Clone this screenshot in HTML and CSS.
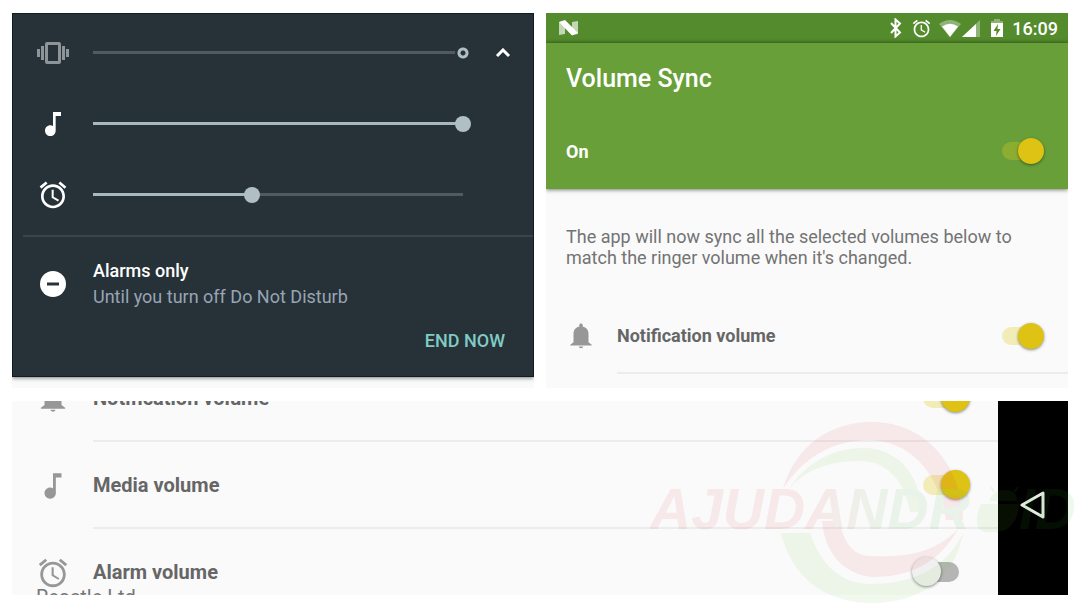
FILE: index.html
```html
<!DOCTYPE html>
<html lang="en">
<head>
   <meta charset="UTF-8">
   <title>Volume Sync</title>
   <link rel="stylesheet" href="styles.css">
</head>
<body>
   <!-- shared icons -->
   <svg class="sprite" width="0" height="0">
      <symbol id="note" viewBox="0 0 24 24"><path d="M12 3v10.550c-.59-.34-1.270-.55-2-.55-2.210 0-4 1.790-4 4s1.790 4 4 4 4-1.790 4-4V6h4V3h-6z"/></symbol>
      <symbol id="alarm" viewBox="0 0 24 24"><path d="M22 5.720l-4.600-3.860-1.290 1.530 4.600 3.860L22 5.720zM7.880 3.390L6.600 1.860 2 5.710l1.290 1.530 4.590-3.850zM12.500 8H11v6l4.750 2.850.75-1.230-4-2.370V8zM12 4c-4.970 0-9 4.030-9 9s4.020 9 9 9c4.970 0 9-4.030 9-9s-4.030-9-9-9zm0 16c-3.870 0-7-3.130-7-7s3.130-7 7-7 7 3.130 7 7-3.130 7-7 7z"/></symbol>
      <symbol id="bell" viewBox="-2 -.5 28 28"><path d="M12 24c1.200 0 2-.8 2-1.600h-4c0 .8.8 1.600 2 1.600zM19 18.500V10.500c0-3.600-2-6.100-5.400-6.900V2.500c0-.9-.7-1.500-1.600-1.500s-1.600.6-1.600 1.500v1.100C7 4.400 5 6.900 5 10.500v8l-3 2.200v.8h20v-.8z"/></symbol>
   </svg>

   <main class="page">
      <section class="panel volume">
         <div class="volume-card">
            <div class="volume-row">
               <svg class="icon muted" viewBox="0 0 32 32"><path d="M10 5h12q2 0 2 2v18q0 2-2 2H10q-2 0-2-2V7q0-2 2-2zm1 3v16h10V8zM4 9h3v14H4zM0 12h3v8H0zM25 9h3v14h-3zM29 12h3v8h-3z"/></svg>
               <input class="slider ring" type="range" value="100" aria-label="Ringer volume" style="--fill: 0%">
               <button class="collapse" type="button" aria-label="Collapse">
                  <svg width="16" height="10" viewBox="0 0 16 10"><path d="M2 8l6-6 6 6"/></svg>
               </button>
            </div>
            <div class="volume-row">
               <svg class="icon"><use href="#note"/></svg>
               <input class="slider" type="range" value="100" aria-label="Media volume" style="--fill: 100%">
            </div>
            <div class="volume-row">
               <svg class="icon"><use href="#alarm"/></svg>
               <input class="slider" type="range" value="43" aria-label="Alarm volume" style="--fill: 43%">
            </div>
            <div class="dnd">
               <svg class="dnd-icon" viewBox="0 0 26 26"><circle cx="13" cy="13" r="13"/><path d="M7 13h12"/></svg>
               <div>
                  <div class="dnd-title">Alarms only</div>
                  <div class="dnd-sub">Until you turn off Do Not Disturb</div>
               </div>
            </div>
            <button class="end" type="button">END NOW</button>
         </div>
      </section>

      <section class="panel app">
         <div class="status">
            <svg width="20" height="16" viewBox="0 0 20 16"><path d="M0 2l6-1v13l-6 1zM13 2l6-1v13l-6 1z" opacity=".65"/><path d="M0 2L6 0l13 13-6 2.500z"/></svg>
            <div class="status-icons">
               <svg class="bt" width="14" height="20" viewBox="0 0 14 20"><path d="M2 5l9 9.500-4.500 4V1.500L11 5.500 2 15"/></svg>
               <svg class="st-alarm" width="21" height="21"><use href="#alarm"/></svg>
               <svg class="wifi" width="22" height="17" viewBox="0 0 22 17"><path d="M0 4Q11-4 22 4L11 17z" opacity=".35"/><path d="M3 6.500Q11 1 19 6.500L11 17z"/></svg>
               <svg class="cell" width="18" height="17" viewBox="0 0 18 17"><path d="M18 0v17H0z" opacity=".35"/><path d="M14 4v13H0z"/></svg>
               <svg class="batt" width="12" height="18" viewBox="0 0 12 18"><path d="M0 2h3V0h6v2h3v3H0z" opacity=".35"/><path fill-rule="evenodd" d="M0 4h12v14H0zM7 5l-4.500 7h3L5 17l4.500-7h-3z"/></svg>
               <span>16:09</span>
            </div>
         </div>
         <header>
            <h1>Volume Sync</h1>
            <label class="master">On <input class="switch" type="checkbox" checked></label>
         </header>
         <p class="about">The app will now sync all the selected volumes below to match the ringer volume when it's changed.</p>
         <label class="item">
            <svg class="item-icon"><use href="#bell"/></svg>
            <span class="item-body">Notification volume <input class="switch" type="checkbox" checked></span>
         </label>
      </section>

      <section class="panel wide">
         <div class="list">
            <label class="item">
               <svg class="item-icon"><use href="#bell"/></svg>
               <span class="item-body">Notification volume <input class="switch" type="checkbox" checked></span>
            </label>
            <label class="item">
               <svg class="item-icon"><use href="#note"/></svg>
               <span class="item-body">Media volume <input class="switch" type="checkbox" checked></span>
            </label>
            <label class="item">
               <svg class="item-icon"><use href="#alarm"/></svg>
               <span class="item-body">Alarm volume <input class="switch" type="checkbox"></span>
            </label>
            <div class="credit">Reactle Ltd</div>
         </div>
         <nav class="navbar">
            <button type="button" aria-label="Back">
               <svg width="26" height="30" viewBox="0 0 26 30"><path d="M2 15L23 3v24z"/></svg>
            </button>
         </nav>
      </section>
   </main>

   <svg class="watermark" width="430" height="186" viewBox="0 0 430 186">
      <defs>
         <linearGradient id="mark" gradientUnits="userSpaceOnUse" x1="160" y1="0" x2="235" y2="0">
            <stop offset="0" stop-color="#e02030"/>
            <stop offset="1" stop-color="#40b030"/>
         </linearGradient>
      </defs>
      <g class="wm-red">
         <path d="M133 68C145 25 180 1 222 1c54 0 90 44 91 98h-17C290 55 262 19 218 19c-36 0-66 19-85 49z"/>
         <path d="M172 100h18c2 18 12 35 30 35 38 2 66-4 88-27-20 36-50 48-86 48-27-3-47-22-50-56z"/>
      </g>
      <g class="wm-green">
         <path d="M139 68c18-28 46-41 75-41 34 0 56 27 58 64h-12c-5-30-22-51-50-51-30 0-54 8-71 28z"/>
         <path d="M131 112h29c10 30 30 51 60 51 42 0 76-15 93-51-8 45-43 70-91 70-45 0-80-24-91-70z"/>
         <path d="M331 83h38c-1 18-10 28-25 28h-7c-11 0-13-12-6-28zM339 80c3-8 9-11 16-11s12 3 12 11z"/>
         <path class="wm-line" d="M344 71l-3-5M364 71l4-5"/>
      </g>
      <text x="0" y="108" fill="url(#mark)">AJUDANDR</text>
      <text x="369" y="108" fill="#40b030">ID</text>
   </svg>
</body>
</html>
```
FILE: styles.css
```css
* {
   box-sizing: border-box;
}
body {
   margin: 0;
   background: white;
   font-family: Roboto, "Liberation Sans", sans-serif;
   position: relative;
   overflow: hidden;
}
button {
   background: none;
   border: none;
   padding: 0;
   font-family: inherit;
   cursor: pointer;
}
.sprite {
   position: absolute;
}
.page {
   min-height: 100vh;
   padding: 13px 12px;
   display: grid;
   grid-template-columns: 1fr 1fr;
   grid-template-rows: auto 1fr;
   gap: 13px 12px;
}
.panel {
   background: #fafafa;
   overflow: hidden;
}

/* volume panel */
.volume {
   padding-bottom: 11px;
}
.volume-card {
   height: 100%;
   padding-top: 3px;
   background: #263238;
   border: 1px solid #101c22;
   box-shadow: 0 1px 4px rgba(0, 0, 0, .5);
   display: flex;
   flex-direction: column;
}
.volume-row {
   height: 71px;
   padding-left: 24px;
   display: flex;
   align-items: center;
}
.icon {
   width: 32px;
   height: 32px;
   fill: white;
}
.muted {
   fill: #8e9599;
}
.slider {
   -webkit-appearance: none;
   appearance: none;
   width: 386px;
   height: 16px;
   margin: 0 0 0 16px;
   background: none;
}
.slider::-webkit-slider-runnable-track {
   height: 16px;
   background: linear-gradient(to right, #a9b7bf var(--fill), #505a60 var(--fill)) center / calc(100% - 16px) 3px no-repeat;
}
.slider::-webkit-slider-thumb {
   -webkit-appearance: none;
   width: 16px;
   height: 16px;
   border-radius: 50%;
   background: #b0bec5;
}
.ring::-webkit-slider-thumb {
   background: radial-gradient(circle, #263238 2px, #b0bec5 3px, #b0bec5 5px, #263238 6px);
}
.collapse {
   margin-left: 24px;
   display: flex;
}
.collapse path {
   fill: none;
   stroke: white;
   stroke-width: 3;
}
.dnd {
   margin-left: 10px;
   padding: 21px 0 0 17px;
   border-top: 2px solid #3a454b;
   margin-top: 5px;
   display: flex;
   align-items: center;
   gap: 27px;
}
.dnd-icon {
   width: 26px;
   height: 26px;
   fill: white;
}
.dnd-icon path {
   stroke: #263238;
   stroke-width: 3;
}
.dnd-title {
   font-size: 18px;
   line-height: 26px;
   font-weight: 500;
   color: white;
}
.dnd-sub {
   font-size: 18px;
   line-height: 26px;
   color: #99a4b4;
}
.end {
   align-self: flex-end;
   margin: 17px 28px 21px 0;
   font-size: 18px;
   line-height: 28px;
   font-weight: 500;
   color: #80cbc4;
}

/* app panel */
.app {
   padding-bottom: 13px;
}
.status {
   height: 30px;
   padding: 0 10px 0 13px;
   background: linear-gradient(#548b2d 26px, #477a25);
   color: white;
   fill: white;
   font-size: 18px;
   font-weight: 500;
   display: flex;
   align-items: center;
   justify-content: space-between;
}
.status-icons {
   display: flex;
   align-items: center;
}
.bt {
   margin-right: 8px;
   fill: none;
   stroke: white;
   stroke-width: 2;
}
.st-alarm {
   margin-right: 7px;
}
.wifi {
   margin-right: 1px;
}
.cell {
   margin-right: 11px;
}
.batt {
   margin-right: 9px;
}
header {
   height: 146px;
   padding: 18px 24px 0 20px;
   background: #689f38;
   color: white;
   box-shadow: 0 1px 4px rgba(0, 0, 0, .5);
}
h1 {
   margin: 0 0 38px;
   font-size: 25px;
   line-height: 36px;
   font-weight: 500;
}
.master {
   height: 32px;
   font-size: 18px;
   font-weight: bold;
   display: flex;
   align-items: center;
   justify-content: space-between;
}
.about {
   margin: 0;
   padding: 37px 40px 31px 20px;
   font-size: 18px;
   line-height: 21px;
   color: #737373;
}
.item {
   padding-left: 20px;
   font-size: 18px;
   font-weight: bold;
   color: #666;
   display: flex;
   align-items: center;
}
.item-icon {
   width: 30px;
   height: 30px;
   fill: #979797;
}
.item-body {
   flex: 1;
   height: 75px;
   margin-left: 21px;
   padding-right: 24px;
   border-bottom: 2px solid #ececec;
   display: flex;
   align-items: center;
   justify-content: space-between;
}

/* switches */
.switch {
   -webkit-appearance: none;
   appearance: none;
   width: 52px;
   height: 26px;
   margin: 0;
   display: flex;
   align-items: center;
   position: relative;
}
.switch::before {
   content: "";
   flex: 1;
   height: 18px;
   margin: 0 10px;
   border-radius: 10px;
   background: #b5b5b5;
}
.switch::after {
   content: "";
   position: absolute;
   left: 0;
   height: 100%;
   aspect-ratio: 1;
   border-radius: 50%;
   background: #f0f0f0;
   box-shadow: 0 1px 3px rgba(0, 0, 0, .45);
}
.switch:checked::before {
   background: rgba(226, 204, 30, .3);
}
.switch:checked::after {
   left: auto;
   right: 0;
   background: #dec214;
}

/* wide panel */
.wide {
   grid-column: 1 / 3;
   height: 194px;
   display: flex;
}
.list {
   flex: 1;
   margin-top: -46px;
   position: relative;
}
.wide .item {
   padding-left: 24px;
   font-size: 20px;
}
.wide .item-icon {
   width: 34px;
   height: 34px;
}
.wide .item-body {
   height: 87px;
   margin-left: 23px;
   padding-right: 28px;
}
.wide .switch {
   width: 58px;
   height: 29px;
}
.wide .switch::before {
   height: 20px;
   margin: 0 11px;
}
.credit {
   position: absolute;
   left: 24px;
   top: 230px;
   font-size: 20px;
   line-height: 24px;
   color: #777;
}
.navbar {
   width: 70px;
   background: black;
   padding-top: 16px;
   display: flex;
   align-items: center;
   justify-content: center;
}
.navbar path {
   fill: none;
   stroke: #e4ece2;
   stroke-width: 3;
   stroke-linejoin: round;
}

/* watermark over the page corner */
.watermark {
   position: absolute;
   right: 0;
   bottom: 1px;
   opacity: .08;
   pointer-events: none;
}
.watermark text {
   font: italic bold 57px "Liberation Sans", sans-serif;
}
.wm-red {
   fill: #e02030;
}
.wm-green {
   fill: #60c030;
}
.wm-line {
   stroke: #60c030;
   stroke-width: 2;
}
```
